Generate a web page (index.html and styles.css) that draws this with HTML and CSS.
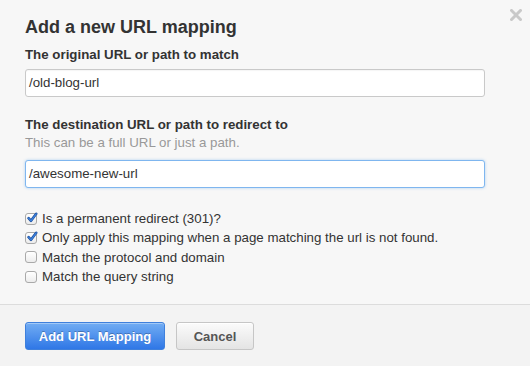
FILE: index.html
```html
<!DOCTYPE html>
<html>
<head>
<meta charset="utf-8">
<link rel="stylesheet" href="styles.css">
</head>
<body>
<div class="dialog">
  <div class="content">
    <button class="close" aria-label="Close">
      <svg width="12" height="12" viewBox="0 0 12 12"><path d="M1.5 1.5 L10.5 10.5 M10.5 1.5 L1.5 10.5" stroke="#c9c9c9" stroke-width="3" stroke-linecap="square"/></svg>
    </button>
    <h1 class="title">Add a new URL mapping</h1>
    <label class="label first">The original URL or path to match</label>
    <div class="input">/old-blog-url</div>
    <label class="label second">The destination URL or path to redirect to</label>
    <div class="help">This can be a full URL or just a path.</div>
    <div class="input focus">/awesome-new-url</div>
    <ul class="checks">
      <li><span class="cb on"><svg width="12" height="12" viewBox="0 0 12 12"><path d="M2.6 6.2 L5 8.8 L10.2 1.8" fill="none" stroke="#1d4f9c" stroke-width="2.6" stroke-linecap="round" stroke-linejoin="round"/><path d="M2.6 6.2 L5 8.8 L10.2 1.8" fill="none" stroke="#3d83e0" stroke-width="1.2" stroke-linecap="round" stroke-linejoin="round"/></svg></span>Is a permanent redirect (301)?</li>
      <li><span class="cb on"><svg width="12" height="12" viewBox="0 0 12 12"><path d="M2.6 6.2 L5 8.8 L10.2 1.8" fill="none" stroke="#1d4f9c" stroke-width="2.6" stroke-linecap="round" stroke-linejoin="round"/><path d="M2.6 6.2 L5 8.8 L10.2 1.8" fill="none" stroke="#3d83e0" stroke-width="1.2" stroke-linecap="round" stroke-linejoin="round"/></svg></span>Only apply this mapping when a page matching the url is not found.</li>
      <li><span class="cb"></span>Match the protocol and domain</li>
      <li><span class="cb"></span>Match the query string</li>
    </ul>
  </div>
  <div class="footer">
    <button class="btn primary">Add URL Mapping</button>
    <button class="btn">Cancel</button>
  </div>
</div>
</body>
</html>
```
FILE: styles.css
```css
* { box-sizing: border-box; }
html, body { margin: 0; padding: 0; }
body {
  width: 530px;
  height: 366px;
  overflow: hidden;
  background: #f7f7f7;
  font-family: "Liberation Sans", Arial, sans-serif;
  color: #333;
}
.dialog {
  display: flex;
  flex-direction: column;
  height: 366px;
}
.content {
  position: relative;
  flex: 1;
  padding: 16px 25px 0 25px;
  display: flex;
  flex-direction: column;
}
.close {
  position: absolute;
  top: 9px;
  right: 8px;
  width: 12px;
  height: 12px;
  padding: 0;
  border: 0;
  background: none;
  display: flex;
}
.title {
  margin: 0;
  font-size: 18px;
  line-height: 22px;
  font-weight: bold;
  color: #333;
}
.label {
  display: block;
  font-size: 13.3px;
  line-height: 16px;
  font-weight: bold;
  color: #333;
}
.label.first { margin-top: 9px; }
.label.second { margin-top: 20px; }
.help {
  margin-top: 2px;
  font-size: 13.3px;
  line-height: 16px;
  color: #999;
}
.input {
  width: 460px;
  height: 28px;
  margin-top: 6px;
  padding: 0 3px;
  border: 1px solid #c9c9c9;
  border-radius: 3px;
  background: #fff;
  font-size: 13.3px;
  line-height: 26px;
  color: #333;
  box-shadow: inset 0 1px 1px rgba(0,0,0,0.04);
}
.input.focus {
  margin-top: 9px;
  border-color: #7fb6ef;
  box-shadow: 0 0 3px rgba(82,160,236,0.45);
}
.checks {
  list-style: none;
  margin: 21px 0 0 0;
  padding: 0;
}
.checks li {
  display: flex;
  align-items: center;
  height: 19.3px;
  font-size: 13.3px;
  color: #333;
}
.cb {
  width: 12px;
  height: 12px;
  margin-right: 5px;
  border: 1px solid #a9a9a9;
  border-radius: 3px;
  background: linear-gradient(#ffffff, #ececec);
  display: flex;
  align-items: center;
  justify-content: center;
  position: relative;
}
.cb svg {
  position: absolute;
  left: 0;
  top: -2px;
}
.footer {
  height: 62px;
  border-top: 1px solid #dcdcdc;
  background: #f3f3f3;
  padding: 17px 25px 0 25px;
  display: flex;
  align-items: flex-start;
  gap: 11px;
}
.btn {
  height: 28px;
  width: 78px;
  padding: 0;
  border: 1px solid #c6c6c6;
  border-radius: 3px;
  background: linear-gradient(#fbfbfb, #e4e4e4);
  font-family: "Liberation Sans", Arial, sans-serif;
  font-size: 13px;
  font-weight: bold;
  color: #555;
  box-shadow: inset 0 1px 0 #fff;
}
.btn.primary {
  width: 140px;
  border-color: #3f80dc;
  background: linear-gradient(#72adf3, #2f77e6);
  color: #fff;
  text-shadow: 0 -1px 0 rgba(0,0,0,0.25);
  box-shadow: inset 0 1px 0 rgba(255,255,255,0.35);
}
```
